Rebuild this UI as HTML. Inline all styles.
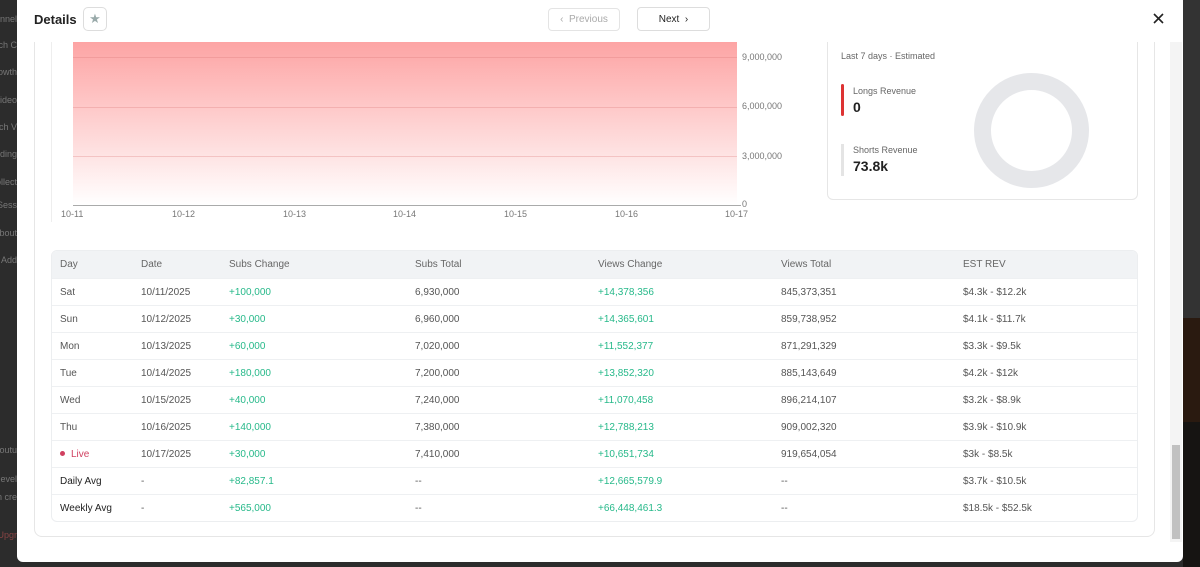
<!DOCTYPE html>
<html><head><meta charset="utf-8"><style>
*{box-sizing:border-box;margin:0;padding:0}
body{width:1200px;height:567px;overflow:hidden;background:#2c2c2c;font-family:"Liberation Sans",sans-serif;position:relative}
.abs{position:absolute}
.side{color:#777;font-size:9px;left:0;width:17px;overflow:hidden;white-space:nowrap;direction:rtl}
.modal{left:17px;top:0;width:1166px;height:562px;background:#fff;border-radius:0 0 6px 6px;overflow:hidden}
.t{font-size:10px;color:#555;position:absolute}
.g{color:#27b98a}
table{border-collapse:collapse;width:1087px;font-size:10px;color:#555}
td{height:27px;border-top:1px solid #eef0f2;padding-left:8px;padding-top:1px}
tr.h td{background:#f1f3f5;border-top:none;color:#666;height:27px}
</style></head><body>
<div class="abs" style="left:1183px;top:0;width:17px;height:318px;background:#333"></div>
<div class="abs" style="left:1183px;top:318px;width:17px;height:104px;background:#2a1a10"></div>
<div class="abs" style="left:1183px;top:422px;width:17px;height:145px;background:#161412"></div>
<div class="abs side" style="top:14px">Channel</div>
<div class="abs side" style="top:40px">Watch C</div>
<div class="abs side" style="top:67px">Growth</div>
<div class="abs side" style="top:95px">Video</div>
<div class="abs side" style="top:122px">Watch V</div>
<div class="abs side" style="top:149px">Trending</div>
<div class="abs side" style="top:177px">Collect</div>
<div class="abs side" style="top:200px">Sess</div>
<div class="abs side" style="top:228px">About</div>
<div class="abs side" style="top:255px">Add</div>
<div class="abs side" style="top:445px">Youtu</div>
<div class="abs side" style="top:474px">Devel</div>
<div class="abs side" style="top:492px">In cre</div>
<div class="abs side" style="top:530px;color:#844">Upgr</div>
<div class="abs modal">
 <div class="abs" style="left:17px;top:-20px;width:1121px;height:557px;border:1px solid #e6e6e6;border-radius:8px"></div>
 <div class="abs" style="left:1153px;top:42px;width:12px;height:500px;background:#f4f4f4"></div>
 <div class="abs" style="left:1155px;top:445px;width:8px;height:94px;background:#c1c1c1"></div>
 <div class="abs" style="left:56px;top:42px;width:664px;height:163px;background:linear-gradient(#fda4a4,#fff)"></div>
 <div class="abs" style="left:56px;top:57px;width:664px;height:1px;background:rgba(220,120,120,.3)"></div>
 <div class="abs" style="left:56px;top:107px;width:664px;height:1px;background:rgba(220,120,120,.3)"></div>
 <div class="abs" style="left:56px;top:156px;width:664px;height:1px;background:rgba(220,120,120,.3)"></div>
 <div class="abs" style="left:56px;top:205px;width:668px;height:1px;background:#aaa"></div>
 <div class="abs" style="left:34px;top:0;width:1px;height:222px;background:#eee"></div>
 <div class="t" style="left:725px;top:52px;font-size:9px;color:#777">9,000,000</div>
 <div class="t" style="left:725px;top:101px;font-size:9px;color:#777">6,000,000</div>
 <div class="t" style="left:725px;top:151px;font-size:9px;color:#777">3,000,000</div>
 <div class="t" style="left:725px;top:199px;font-size:9px;color:#777">0</div>
 <div class="t" style="left:44px;top:209px;font-size:9px;color:#777">10-11</div>
 <div class="t" style="left:155px;top:209px;font-size:9px;color:#777">10-12</div>
 <div class="t" style="left:266px;top:209px;font-size:9px;color:#777">10-13</div>
 <div class="t" style="left:376px;top:209px;font-size:9px;color:#777">10-14</div>
 <div class="t" style="left:487px;top:209px;font-size:9px;color:#777">10-15</div>
 <div class="t" style="left:598px;top:209px;font-size:9px;color:#777">10-16</div>
 <div class="t" style="left:708px;top:209px;font-size:9px;color:#777">10-17</div>
 <div class="abs" style="left:810px;top:-20px;width:311px;height:220px;border:1px solid #e6e6e6;border-radius:6px"></div>
 <div class="t" style="left:824px;top:51px;font-size:9px;color:#666">Last 7 days · Estimated</div>
 <div class="abs" style="left:824px;top:84px;width:3px;height:32px;background:#d33;border-radius:2px"></div>
 <div class="t" style="left:836px;top:86px;font-size:9px;color:#666">Longs Revenue</div>
 <div class="abs" style="left:836px;top:99px;font-size:14px;font-weight:bold;color:#222">0</div>
 <div class="abs" style="left:824px;top:144px;width:3px;height:32px;background:#e4e4e4"></div>
 <div class="t" style="left:836px;top:145px;font-size:9px;color:#666">Shorts Revenue</div>
 <div class="abs" style="left:836px;top:158px;font-size:14px;font-weight:bold;color:#222">73.8k</div>
 <div class="abs" style="left:957px;top:73px;width:115px;height:115px;border:17px solid #e6e7ea;border-radius:50%"></div>
 <div class="abs" style="left:0;top:0;width:1166px;height:42px;background:#fff"></div>
 <div class="abs" style="left:17px;top:12px;font-size:13px;font-weight:bold;color:#222">Details</div>
 <div class="abs" style="left:66px;top:7px;width:24px;height:24px;border:1px solid #ddd;border-radius:5px;text-align:center;line-height:22px;color:#9aa;font-size:13px">★</div>
 <div class="abs" style="left:531px;top:8px;width:72px;height:23px;border:1px solid #e4e4e4;border-radius:4px;font-size:10px;color:#aaa;text-align:center;line-height:22px">‹&nbsp;&nbsp;Previous</div>
 <div class="abs" style="left:620px;top:7px;width:73px;height:24px;border:1px solid #ddd;border-radius:4px;font-size:10px;color:#222;text-align:center;line-height:23px">Next&nbsp;&nbsp;›</div>
 <svg class="abs" style="left:1136px;top:13px" width="11" height="11" viewBox="0 0 11 11"><path d="M1 1L10 10M10 1L1 10" stroke="#222" stroke-width="1.6"/></svg>
 <div class="abs" style="left:34px;top:250px;width:1087px;border:1px solid #eceef0;border-radius:6px;overflow:hidden">
 <table>
 <colgroup><col style="width:81px"><col style="width:88px"><col style="width:186px"><col style="width:183px"><col style="width:183px"><col style="width:182px"><col></colgroup>
 <tr class="h"><td>Day</td><td>Date</td><td>Subs Change</td><td>Subs Total</td><td>Views Change</td><td>Views Total</td><td>EST REV</td></tr>
 <tr><td>Sat</td><td>10/11/2025</td><td class="g">+100,000</td><td>6,930,000</td><td class="g">+14,378,356</td><td>845,373,351</td><td>$4.3k - $12.2k</td></tr>
 <tr><td>Sun</td><td>10/12/2025</td><td class="g">+30,000</td><td>6,960,000</td><td class="g">+14,365,601</td><td>859,738,952</td><td>$4.1k - $11.7k</td></tr>
 <tr><td>Mon</td><td>10/13/2025</td><td class="g">+60,000</td><td>7,020,000</td><td class="g">+11,552,377</td><td>871,291,329</td><td>$3.3k - $9.5k</td></tr>
 <tr><td>Tue</td><td>10/14/2025</td><td class="g">+180,000</td><td>7,200,000</td><td class="g">+13,852,320</td><td>885,143,649</td><td>$4.2k - $12k</td></tr>
 <tr><td>Wed</td><td>10/15/2025</td><td class="g">+40,000</td><td>7,240,000</td><td class="g">+11,070,458</td><td>896,214,107</td><td>$3.2k - $8.9k</td></tr>
 <tr><td>Thu</td><td>10/16/2025</td><td class="g">+140,000</td><td>7,380,000</td><td class="g">+12,788,213</td><td>909,002,320</td><td>$3.9k - $10.9k</td></tr>
 <tr><td style="color:#d04060"><span style="display:inline-block;width:5px;height:5px;border-radius:50%;background:#d04060;margin-right:6px;vertical-align:1px"></span>Live</td><td>10/17/2025</td><td class="g">+30,000</td><td>7,410,000</td><td class="g">+10,651,734</td><td>919,654,054</td><td>$3k - $8.5k</td></tr>
 <tr><td style="color:#222">Daily Avg</td><td>-</td><td class="g">+82,857.1</td><td>--</td><td class="g">+12,665,579.9</td><td>--</td><td>$3.7k - $10.5k</td></tr>
 <tr><td style="color:#222">Weekly Avg</td><td>-</td><td class="g">+565,000</td><td>--</td><td class="g">+66,448,461.3</td><td>--</td><td>$18.5k - $52.5k</td></tr>
 </table></div>
</div>
</body></html>
